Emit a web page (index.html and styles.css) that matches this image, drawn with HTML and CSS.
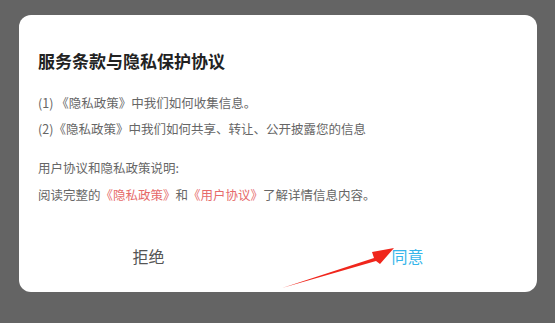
FILE: index.html
```html
<!DOCTYPE html>
<html lang="zh-CN">
<head>
  <meta charset="UTF-8" />
  <meta name="viewport" content="width=device-width, initial-scale=1.0"/>
  <title>服务条款与隐私保护协议</title>
  <link rel="stylesheet" href="styles.css">
</head>
<body>
  <div class="dialog">
    <h1 class="title">服务条款与隐私保护协议</h1>

    <div class="section">
      <p>(1) 《隐私政策》中我们如何收集信息。</p>
      <p>(2)《隐私政策》中我们如何共享、转让、公开披露您的信息</p>
    </div>

    <div class="section second">
      <p>用户协议和隐私政策说明:</p>
      <p>阅读完整的<a class="link">《隐私政策》</a>和<a class="link">《用户协议》</a>了解详情信息内容。</p>
    </div>

    <div class="actions">
      <button class="action refuse">拒绝</button>
      <button class="action agree">同意</button>
    </div>

    <!-- annotation arrow -->
    <svg class="arrow" width="130" height="50" viewBox="0 0 130 50">
      <polygon points="0,40 92,10 90,4 112,0 98,16 94,13" fill="#f0261c"/>
    </svg>
  </div>
</body>
</html>
```

FILE: styles.css
```css
* {
  margin: 0;
  padding: 0;
  box-sizing: border-box;
}

body {
  font-family: "Noto Sans CJK SC", "Noto Sans", sans-serif;
  background: #646464;
  padding: 15px 18px 0 19px;
}

.dialog {
  position: relative;
  width: 518px;
  height: 277px;
  background: #fff;
  border-radius: 12px;
  padding: 32px 19px 0;
}

.title {
  font-size: 17px;
  font-weight: 700;
  line-height: 28px;
  color: #222;
  margin-bottom: 15px;
}

.section p {
  font-size: 12.5px;
  line-height: 26px;
  color: #666;
  white-space: nowrap;
}

.section.second {
  margin-top: 12px;
}

.section.second p {
  line-height: 27px;
}

.link {
  color: #e66a6a;
}

.actions {
  display: flex;
  margin: 28px -19px 0;
}

.action {
  flex: 1;
  height: 40px;
  border: none;
  background: none;
  font-family: inherit;
  font-size: 16px;
}

.refuse {
  color: #555;
}

.agree {
  color: #35b5ea;
}

.arrow {
  position: absolute;
  left: 263px;
  top: 233px;
}
```
